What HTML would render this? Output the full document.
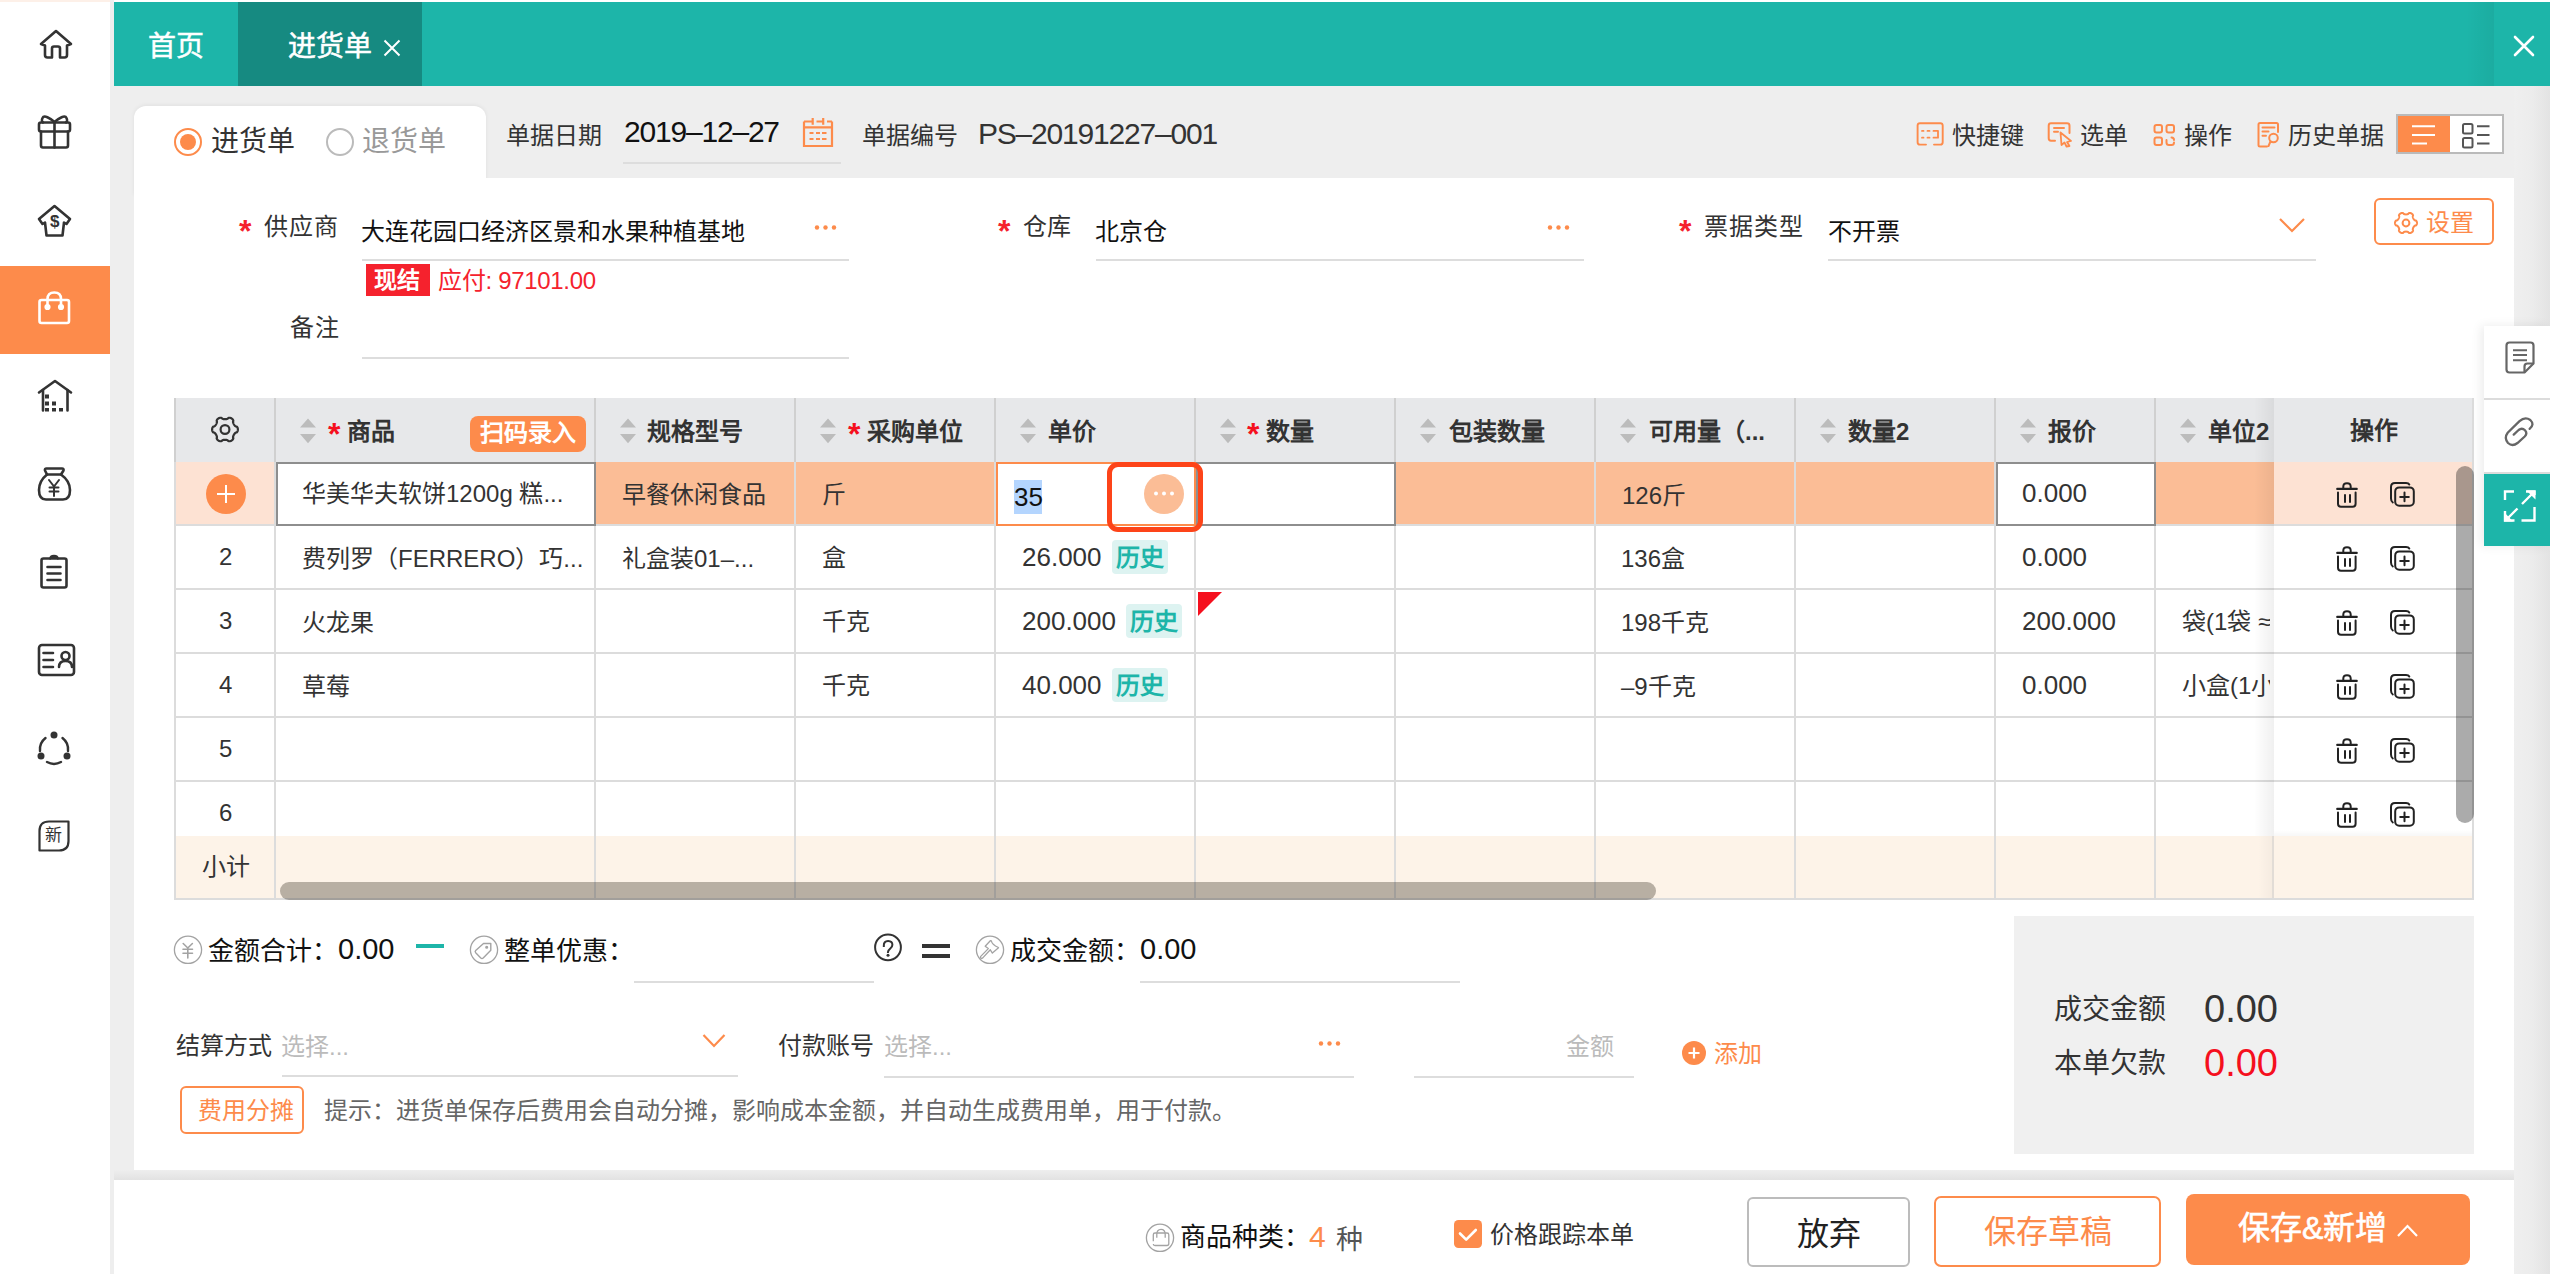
<!DOCTYPE html>
<html lang="zh-CN"><head><meta charset="utf-8">
<style>
html,body{margin:0;padding:0;}
body{width:2550px;height:1274px;overflow:hidden;position:relative;background:#eeeeee;font-family:"Liberation Sans",sans-serif;color:#333;}
.a{position:absolute;}
.t{position:absolute;white-space:nowrap;line-height:1;}
.hl{position:absolute;height:2px;background:#dddddd;}
.vl{position:absolute;width:2px;background:#dddddd;}
svg{position:absolute;overflow:visible;}
</style></head><body>

<!-- SIDEBAR -->
<div class="a" style="left:0;top:0;width:110px;height:1274px;background:#fff;"></div>
<div class="a" style="left:0;top:0;width:110px;height:2px;background:#fdf0e8;"></div>
<div class="a" style="left:0;top:266px;width:110px;height:88px;background:#fd8b4b;"></div>

<!-- HEADER -->
<div class="a" style="left:114px;top:0;width:2436px;height:2px;background:#fff;"></div>
<div class="a" style="left:114px;top:2px;width:2436px;height:84px;background:#1db5a9;"></div>
<div class="a" style="left:238px;top:2px;width:184px;height:84px;background:#168a81;"></div>
<div class="a" style="left:2466px;top:2px;width:28px;height:84px;background:linear-gradient(to right,rgba(0,0,0,0),rgba(0,0,0,0.05));"></div>

<div class="a" style="left:2514px;top:86px;width:36px;height:1188px;background:linear-gradient(to right,#efefef,#ececec 50%,#e3e3e3);"></div>
<!-- CARD -->
<div class="a" style="left:134px;top:106px;width:352px;height:90px;background:#fff;border-radius:12px 12px 0 0;box-shadow:0 -1px 4px rgba(0,0,0,0.06);"></div>
<div class="a" style="left:134px;top:178px;width:2380px;height:992px;background:#fff;"></div>

<!-- BOTTOM BAR -->
<div class="a" style="left:114px;top:1170px;width:2400px;height:10px;background:linear-gradient(to bottom,#eeeeee,#e2e2e2);"></div>
<div class="a" style="left:114px;top:1180px;width:2400px;height:94px;background:#fff;"></div>


<!-- SIDEBAR ICONS -->
<svg width="110" height="900" style="left:0;top:0" fill="none" stroke="#333" stroke-width="2.6" stroke-linejoin="round" stroke-linecap="round">
 <path d="M41,44 L56,31 L71,44 L67,45.5 L67,55 Q67,57.5 64.5,57.5 L60,57.5 L60,48.5 Q60,46.5 58,46.5 L54,46.5 Q52,46.5 52,48.5 L52,57.5 L47.5,57.5 Q45,57.5 45,55 L45,45.5 Z"/>
 <rect x="39" y="122.5" width="31" height="9" rx="2"/>
 <path d="M41,131.5 L41,145.5 Q41,147.5 43,147.5 L66,147.5 Q68,147.5 68,145.5 L68,131.5"/>
 <path d="M54.5,122.5 L54.5,147.5"/>
 <path d="M54.5,122 C50,118 44,114.5 42.5,118 C41.5,120 42,122 43,122.5"/>
 <path d="M54.5,122 C59,118 65,114.5 66.5,118 C67.5,120 67,122 66,122.5"/>
 <path d="M54.5,206 L70,219 L66.5,224 L64,222.5 L62.5,235.5 L46.5,235.5 L45,222.5 L42.5,224 L39,219 Z"/>
 <path d="M396,0" />
 <path d="M39,392.5 L55,381 L71,392.5"/>
 <path d="M43,390 L43,410.5 M67.5,390 L67.5,410.5"/>
 <path d="M47,474.5 L45,470.5 Q44.5,468.5 46.5,468.5 L62,468.5 Q64,468.5 63.5,470.5 L61,474.5"/>
 <path d="M47,474.5 Q39,481 39,490 Q39,499.5 46,499.5 L63,499.5 Q70,499.5 70,490 Q70,481 61,474.5 Z"/>
 <path d="M49,480 L54,486.5 L59,480 M54,486.5 L54,496 M49.5,487.5 L58.5,487.5 M49.5,491.5 L58.5,491.5" stroke-width="2"/>
 <path d="M50,558.5 L43.5,558.5 Q41.5,558.5 41.5,560.5 L41.5,585.5 Q41.5,587.5 43.5,587.5 L64.5,587.5 Q66.5,587.5 66.5,585.5 L66.5,560.5 Q66.5,558.5 64.5,558.5 L58,558.5"/>
 <path d="M50.5,558.5 Q50.5,556 54,556 Q57.5,556 57.5,558.5 Z"/>
 <path d="M47.5,567 L60.5,567 M47.5,573.5 L60.5,573.5 M47.5,580 L60.5,580"/>
 <rect x="39" y="645" width="35" height="30" rx="3"/>
 <path d="M43.5,653 L53,653 M43.5,660 L53,660 M43.5,667 L53,667"/>
 <circle cx="65.5" cy="656" r="4"/>
 <path d="M59,667 Q59,661 65.5,661 Q72,661 72,667"/>
 <path d="M45.5,738 A14.5,14.5 0 0 0 40,751" stroke-width="2.4"/>
 <path d="M62.5,738 A14.5,14.5 0 0 1 68,751" stroke-width="2.4"/>
 <path d="M47,762 A14.5,14.5 0 0 0 61,762" stroke-width="2.4"/>
 <circle cx="54" cy="735" r="3.5" fill="#333" stroke="none"/>
 <circle cx="41" cy="756" r="3.5" fill="#333" stroke="none"/>
 <circle cx="67" cy="756" r="3.5" fill="#333" stroke="none"/>
 <path d="M39.5,850.5 L39.5,831 Q39.5,821.5 49,821.5 L68.5,821.5 L68.5,841 Q68.5,850.5 59,850.5 Z" stroke-width="2.2"/>
</svg>
<div class="t" style="left:50px;top:213px;font-size:17px;font-weight:bold;color:#333;">$</div>
<svg width="10" height="10" style="left:0;top:0" fill="#333">
 <rect x="45" y="394.5" width="4" height="4"/>
 <rect x="45" y="401.5" width="4" height="4"/><rect x="52" y="401.5" width="4" height="4"/>
 <rect x="45" y="408" width="4" height="3.5"/><rect x="52" y="408" width="4" height="3.5"/><rect x="59" y="408" width="4" height="3.5"/>
</svg>
<svg width="110" height="40" style="left:0;top:290px" fill="none" stroke="#fff" stroke-width="2.6" stroke-linejoin="round">
 <rect x="39.5" y="10" width="29.5" height="23" rx="2"/>
 <path d="M47.5,16 L47.5,9 Q47.5,2.5 54.3,2.5 Q61,2.5 61,9 L61,16"/>
 <circle cx="47.5" cy="17" r="1.8" fill="#fff"/><circle cx="61" cy="17" r="1.8" fill="#fff"/>
</svg>
<div class="t" style="left:45px;top:827px;font-size:17px;color:#333;">新</div>

<!-- HEADER TEXT -->
<div class="t" style="left:148px;top:33px;font-size:28px;color:#fff;-webkit-text-stroke:0.5px #fff;">首页</div>
<div class="t" style="left:288px;top:33px;font-size:28px;color:#fff;-webkit-text-stroke:0.5px #fff;">进货单</div>
<svg width="20" height="20" style="left:383px;top:39px" stroke="#fff" stroke-width="2"><path d="M1.5,1.5 L16.5,16.5 M16.5,1.5 L1.5,16.5"/></svg>
<svg width="24" height="24" style="left:2512px;top:34px" stroke="#fff" stroke-width="2.6" stroke-linecap="round"><path d="M3,3 L21,21 M21,3 L3,21"/></svg>


<!-- TOP FORM ROW -->
<svg width="40" height="40" style="left:168px;top:122px"><circle cx="20" cy="20" r="13" fill="none" stroke="#fd8b4b" stroke-width="2"/><circle cx="20" cy="20" r="8" fill="#fd8b4b"/></svg>
<div class="t" style="left:211px;top:128px;font-size:28px;color:#333;">进货单</div>
<svg width="40" height="40" style="left:320px;top:122px"><circle cx="20" cy="20" r="13" fill="none" stroke="#bbb" stroke-width="2"/></svg>
<div class="t" style="left:362px;top:128px;font-size:28px;color:#999;">退货单</div>
<div class="t" style="left:506px;top:124px;font-size:24px;color:#333;">单据日期</div>
<div class="t" style="left:624px;top:117px;font-size:30px;letter-spacing:-1.2px;color:#111;">2019–12–27</div>
<svg width="40" height="40" style="left:800px;top:114px" fill="none" stroke="#fd8b4b" stroke-width="2.2">
 <path d="M4,7.5 L4,32 L32,32 L32,7.5 M4,7.5 L12.5,7.5 M16.5,7.5 L23,7.5 M27,7.5 L32,7.5 M4,13.3 L32,13.3 M12.7,4 L12.7,10.7 M23.2,4 L23.2,10.7"/>
 <path d="M9.5,19 L13.5,19 M16,19 L20,19 M22,19 L26.5,19 M9.5,25 L13.5,25 M16,25 L20,25 M22,25 L26.5,25" stroke-width="2"/>
</svg>
<div class="hl" style="left:623px;top:162px;width:218px;"></div>
<div class="t" style="left:862px;top:124px;font-size:24px;color:#333;">单据编号</div>
<div class="t" style="left:978px;top:119px;font-size:30px;letter-spacing:-1.2px;color:#333;">PS–20191227–001</div>

<!-- TOOLBAR -->
<svg width="300" height="40" style="left:1910px;top:115px" fill="none" stroke="#fd8b4b" stroke-width="2" stroke-linecap="round" stroke-linejoin="round">
 <path d="M16,29.6 L10,29.6 Q7.6,29.6 7.6,27.2 L7.6,10.6 Q7.6,8.2 10,8.2 L30.3,8.2 Q32.7,8.2 32.7,10.6 L32.7,27.2 Q32.7,29.6 30.3,29.6 L24,29.6" stroke-width="1.9"/>
 <path d="M12,15.9 L13.5,15.9 M17.5,15.9 L19.5,15.9 M23.5,15.9 L28,15.9 L28,22.7 M12,22.7 L13.5,22.7 M17.5,22.7 L19.5,22.7 M23.5,22.7 L28,22.7" stroke-width="1.8"/>
 <path d="M145,25.7 L141,25.7 Q138.7,25.7 138.7,23.3 L138.7,10.7 Q138.7,8.3 141,8.3 L157,8.3 Q159.5,8.3 159.5,10.7 L159.5,18"/>
 <path d="M144,13 L154,13 M144,16.7 L148,16.7"/>
 <path d="M150.5,17.5 L161,26 L157,27 L159.5,31 L156.5,31.5 L154.5,27.5 L151.5,30 Z" stroke-width="1.8"/>
 <rect x="244.5" y="10" width="7.5" height="7.5" rx="2"/>
 <rect x="256.5" y="10" width="7.5" height="7.5" rx="2"/>
 <rect x="244.5" y="22.5" width="7.5" height="7.5" rx="2"/>
 <path d="M256.5,25 L256.5,27.5 Q256.5,30 259,30 L261.5,30 Q264,30 264,27.5 M264,25 Q264,22.5 261.5,22.5"/>
</svg>
<svg width="40" height="40" style="left:2250px;top:115px" fill="none" stroke="#fd8b4b" stroke-width="2" stroke-linecap="round" stroke-linejoin="round">
 <path d="M17,31.5 L10,31.5 Q8.5,31.5 8.5,30 L8.5,9.5 Q8.5,8 10,8 L26.5,8 Q28,8 28,9.5 L28,17"/>
 <path d="M12.5,12.6 L24.5,12.6 M12.5,16.5 L18.5,16.5 M12.5,20.8 L16,20.8"/>
 <circle cx="23.5" cy="23" r="4.3"/>
 <path d="M20.5,26.5 L18.5,31"/>
</svg>
<div class="t" style="left:1952px;top:124px;font-size:24px;color:#333;">快捷键</div>
<div class="t" style="left:2080px;top:124px;font-size:24px;color:#333;">选单</div>
<div class="t" style="left:2184px;top:124px;font-size:24px;color:#333;">操作</div>
<div class="t" style="left:2288px;top:124px;font-size:24px;color:#333;">历史单据</div>
<div class="a" style="left:2396px;top:114px;width:104px;height:36px;border:2px solid #bababa;background:#fff;"></div>
<div class="a" style="left:2398px;top:116px;width:52px;height:36px;background:#fd8b4b;"></div>
<svg width="120" height="50" style="left:2390px;top:110px" fill="none" stroke-width="2">
 <path d="M22,16.2 L45,16.2 M22,24.9 L45,24.9 M22,33.4 L37,33.4" stroke="#fff"/>
 <rect x="73" y="14" width="9.5" height="9.5" rx="1.5" stroke="#555"/>
 <rect x="73" y="28" width="9.5" height="9.5" rx="1.5" stroke="#555"/>
 <path d="M87,16.2 L99.5,16.2 M87,24.9 L99.5,24.9 M87,33.4 L99.5,33.4" stroke="#555"/>
</svg>


<!-- FORM ROWS -->
<div class="t" style="left:239px;top:215px;font-size:32px;font-weight:bold;color:#f5222d;">*</div>
<div class="t" style="left:264px;top:215px;font-size:24px;color:#333;letter-spacing:1px;">供应商</div>
<div class="t" style="left:361px;top:220px;font-size:24px;color:#111;">大连花园口经济区景和水果种植基地</div>
<svg width="30" height="10" style="left:812px;top:222px" fill="#fd8b4b"><circle cx="5" cy="5.5" r="2.2"/><circle cx="13.5" cy="5.5" r="2.2"/><circle cx="22" cy="5.5" r="2.2"/></svg>
<div class="hl" style="left:362px;top:259px;width:487px;"></div>
<div class="a" style="left:366px;top:264px;width:64px;height:32px;background:#f5222d;"></div>
<div class="t" style="left:374px;top:269px;font-size:23px;color:#fff;font-weight:bold;">现结</div>
<div class="t" style="left:438px;top:269px;font-size:24px;letter-spacing:-0.3px;color:#f5222d;">应付: 97101.00</div>
<div class="t" style="left:290px;top:316px;font-size:24px;color:#333;letter-spacing:1px;">备注</div>
<div class="hl" style="left:362px;top:357px;width:487px;"></div>

<div class="t" style="left:998px;top:215px;font-size:32px;font-weight:bold;color:#f5222d;">*</div>
<div class="t" style="left:1023px;top:215px;font-size:24px;color:#333;">仓库</div>
<div class="t" style="left:1095px;top:220px;font-size:24px;color:#111;">北京仓</div>
<svg width="30" height="10" style="left:1545px;top:222px" fill="#fd8b4b"><circle cx="5" cy="5.5" r="2.2"/><circle cx="13.5" cy="5.5" r="2.2"/><circle cx="22" cy="5.5" r="2.2"/></svg>
<div class="hl" style="left:1096px;top:259px;width:488px;"></div>

<div class="t" style="left:1679px;top:215px;font-size:32px;font-weight:bold;color:#f5222d;">*</div>
<div class="t" style="left:1704px;top:215px;font-size:24px;color:#333;letter-spacing:1px;">票据类型</div>
<div class="t" style="left:1828px;top:220px;font-size:24px;color:#111;">不开票</div>
<svg width="30" height="20" style="left:2277px;top:216px" fill="none" stroke="#fd8b4b" stroke-width="2.2"><path d="M3,3 L15,15 L27,3"/></svg>
<div class="hl" style="left:1828px;top:259px;width:488px;"></div>

<div class="a" style="left:2374px;top:198px;width:116px;height:43px;border:2px solid #fd8b4b;border-radius:6px;"></div>
<svg width="36" height="36" style="left:2388px;top:205px" fill="none" stroke="#fd8b4b" stroke-width="2"><path transform="translate(18,18)" d="M11.00,0.00 L10.98,0.38 L10.92,0.76 L10.82,1.14 L10.68,1.50 L10.49,1.85 L10.24,2.18 L9.89,2.46 L9.05,2.59 L8.69,2.82 L8.41,3.06 L8.18,3.30 L7.97,3.55 L7.78,3.79 L7.60,4.04 L7.45,4.30 L7.30,4.56 L7.17,4.84 L7.06,5.13 L6.95,5.43 L6.86,5.75 L6.79,6.11 L6.77,6.54 L7.08,7.33 L7.00,7.78 L6.84,8.16 L6.64,8.50 L6.39,8.80 L6.12,9.08 L5.82,9.32 L5.50,9.53 L5.16,9.70 L4.80,9.84 L4.43,9.94 L4.04,10.00 L3.64,10.01 L3.23,9.95 L2.81,9.79 L2.28,9.13 L1.90,8.93 L1.55,8.82 L1.23,8.73 L0.91,8.67 L0.60,8.63 L0.30,8.61 L0.00,8.60 L-0.30,8.61 L-0.60,8.63 L-0.91,8.67 L-1.23,8.73 L-1.55,8.82 L-1.90,8.93 L-2.28,9.13 L-2.81,9.79 L-3.23,9.95 L-3.64,10.01 L-4.04,10.00 L-4.43,9.94 L-4.80,9.84 L-5.16,9.70 L-5.50,9.53 L-5.82,9.32 L-6.12,9.08 L-6.39,8.80 L-6.64,8.50 L-6.84,8.16 L-7.00,7.78 L-7.08,7.33 L-6.77,6.54 L-6.79,6.11 L-6.86,5.75 L-6.95,5.43 L-7.06,5.13 L-7.17,4.84 L-7.30,4.56 L-7.45,4.30 L-7.60,4.04 L-7.78,3.79 L-7.97,3.55 L-8.18,3.30 L-8.41,3.06 L-8.69,2.82 L-9.05,2.59 L-9.89,2.46 L-10.24,2.18 L-10.49,1.85 L-10.68,1.50 L-10.82,1.14 L-10.92,0.76 L-10.98,0.38 L-11.00,0.00 L-10.98,-0.38 L-10.92,-0.76 L-10.82,-1.14 L-10.68,-1.50 L-10.49,-1.85 L-10.24,-2.18 L-9.89,-2.46 L-9.05,-2.59 L-8.69,-2.82 L-8.41,-3.06 L-8.18,-3.30 L-7.97,-3.55 L-7.78,-3.79 L-7.60,-4.04 L-7.45,-4.30 L-7.30,-4.56 L-7.17,-4.84 L-7.06,-5.13 L-6.95,-5.43 L-6.86,-5.75 L-6.79,-6.11 L-6.77,-6.54 L-7.08,-7.33 L-7.00,-7.78 L-6.84,-8.16 L-6.64,-8.50 L-6.39,-8.80 L-6.12,-9.08 L-5.82,-9.32 L-5.50,-9.53 L-5.16,-9.70 L-4.80,-9.84 L-4.43,-9.94 L-4.04,-10.00 L-3.64,-10.01 L-3.23,-9.95 L-2.81,-9.79 L-2.28,-9.13 L-1.90,-8.93 L-1.55,-8.82 L-1.23,-8.73 L-0.91,-8.67 L-0.60,-8.63 L-0.30,-8.61 L-0.00,-8.60 L0.30,-8.61 L0.60,-8.63 L0.91,-8.67 L1.23,-8.73 L1.55,-8.82 L1.90,-8.93 L2.28,-9.13 L2.81,-9.79 L3.23,-9.95 L3.64,-10.01 L4.04,-10.00 L4.43,-9.94 L4.80,-9.84 L5.16,-9.70 L5.50,-9.53 L5.82,-9.32 L6.12,-9.08 L6.39,-8.80 L6.64,-8.50 L6.84,-8.16 L7.00,-7.78 L7.08,-7.33 L6.77,-6.54 L6.79,-6.11 L6.86,-5.75 L6.95,-5.43 L7.06,-5.13 L7.17,-4.84 L7.30,-4.56 L7.45,-4.30 L7.60,-4.04 L7.78,-3.79 L7.97,-3.55 L8.18,-3.30 L8.41,-3.06 L8.69,-2.82 L9.05,-2.59 L9.89,-2.46 L10.24,-2.18 L10.49,-1.85 L10.68,-1.50 L10.82,-1.14 L10.92,-0.76 L10.98,-0.38 L11.00,-0.00Z" stroke-linejoin="round"/><circle cx="18" cy="18" r="3.4"/></svg>
<div class="t" style="left:2426px;top:211px;font-size:24px;color:#fd8b4b;">设置</div>

<!-- TABLE -->
<div class="a" style="left:174px;top:398px;width:2300px;height:502px;background:#fff;"></div>
<div class="a" style="left:174px;top:398px;width:2300px;height:64px;background:#e7e8ea;"></div>
<div class="a" style="left:176px;top:462px;width:98px;height:62px;background:#fde2d3;"></div>
<div class="a" style="left:596px;top:462px;width:1678px;height:62px;background:#fbbd96;"></div>
<div class="a" style="left:176px;top:836px;width:2296px;height:62px;background:#fdf3e8;"></div>
<div class="vl" style="left:174px;top:398px;height:502px;background:#dcdcdc;"></div><div class="vl" style="left:174px;top:398px;height:64px;background:#d0d0d0;"></div>
<div class="vl" style="left:274px;top:398px;height:502px;background:#dcdcdc;"></div><div class="vl" style="left:274px;top:398px;height:64px;background:#d0d0d0;"></div>
<div class="vl" style="left:594px;top:398px;height:502px;background:#dcdcdc;"></div><div class="vl" style="left:594px;top:398px;height:64px;background:#d0d0d0;"></div>
<div class="vl" style="left:794px;top:398px;height:502px;background:#dcdcdc;"></div><div class="vl" style="left:794px;top:398px;height:64px;background:#d0d0d0;"></div>
<div class="vl" style="left:994px;top:398px;height:502px;background:#dcdcdc;"></div><div class="vl" style="left:994px;top:398px;height:64px;background:#d0d0d0;"></div>
<div class="vl" style="left:1194px;top:398px;height:502px;background:#dcdcdc;"></div><div class="vl" style="left:1194px;top:398px;height:64px;background:#d0d0d0;"></div>
<div class="vl" style="left:1394px;top:398px;height:502px;background:#dcdcdc;"></div><div class="vl" style="left:1394px;top:398px;height:64px;background:#d0d0d0;"></div>
<div class="vl" style="left:1594px;top:398px;height:502px;background:#dcdcdc;"></div><div class="vl" style="left:1594px;top:398px;height:64px;background:#d0d0d0;"></div>
<div class="vl" style="left:1794px;top:398px;height:502px;background:#dcdcdc;"></div><div class="vl" style="left:1794px;top:398px;height:64px;background:#d0d0d0;"></div>
<div class="vl" style="left:1994px;top:398px;height:502px;background:#dcdcdc;"></div><div class="vl" style="left:1994px;top:398px;height:64px;background:#d0d0d0;"></div>
<div class="vl" style="left:2154px;top:398px;height:502px;background:#dcdcdc;"></div><div class="vl" style="left:2154px;top:398px;height:64px;background:#d0d0d0;"></div>
<div class="hl" style="left:176px;top:524px;width:2296px;background:#dcdcdc;"></div>
<div class="hl" style="left:176px;top:588px;width:2296px;background:#dcdcdc;"></div>
<div class="hl" style="left:176px;top:652px;width:2296px;background:#dcdcdc;"></div>
<div class="hl" style="left:176px;top:716px;width:2296px;background:#dcdcdc;"></div>
<div class="hl" style="left:176px;top:780px;width:2296px;background:#dcdcdc;"></div>
<div class="hl" style="left:174px;top:898px;width:2300px;background:#dcdcdc;"></div>
<div class="vl" style="left:2472px;top:398px;height:502px;background:#dcdcdc;"></div>
<div class="a" style="left:276px;top:462px;width:316px;height:60px;border:2px solid #8e8e8e;background:#fff;"></div>
<div class="a" style="left:996px;top:462px;width:196px;height:60px;border:2px solid #fd8b4b;background:#fff;"></div>
<div class="a" style="left:1196px;top:462px;width:196px;height:60px;border:2px solid #8e8e8e;background:#fff;"></div>
<div class="a" style="left:1996px;top:462px;width:156px;height:60px;border:2px solid #8e8e8e;background:#fff;"></div>
<svg width="40" height="40" style="left:205px;top:409px" fill="none" stroke="#333" stroke-width="2.2"><path transform="translate(20,20.5)" d="M12.90,0.00 L12.88,0.45 L12.81,0.90 L12.70,1.33 L12.54,1.76 L12.33,2.17 L12.05,2.56 L11.66,2.91 L10.75,3.08 L10.34,3.36 L10.04,3.65 L9.77,3.95 L9.53,4.24 L9.31,4.54 L9.11,4.84 L8.92,5.15 L8.75,5.47 L8.59,5.79 L8.44,6.13 L8.30,6.49 L8.18,6.87 L8.08,7.28 L8.04,7.77 L8.35,8.65 L8.25,9.16 L8.05,9.59 L7.80,9.98 L7.51,10.33 L7.18,10.65 L6.83,10.93 L6.45,11.17 L6.05,11.38 L5.63,11.54 L5.19,11.67 L4.74,11.74 L4.28,11.76 L3.81,11.72 L3.31,11.55 L2.70,10.85 L2.26,10.64 L1.85,10.52 L1.47,10.43 L1.09,10.37 L0.72,10.33 L0.36,10.31 L0.00,10.30 L-0.36,10.31 L-0.72,10.33 L-1.09,10.37 L-1.47,10.43 L-1.85,10.52 L-2.26,10.64 L-2.70,10.85 L-3.31,11.55 L-3.81,11.72 L-4.28,11.76 L-4.74,11.74 L-5.19,11.67 L-5.63,11.54 L-6.05,11.38 L-6.45,11.17 L-6.83,10.93 L-7.18,10.65 L-7.51,10.33 L-7.80,9.98 L-8.05,9.59 L-8.25,9.16 L-8.35,8.65 L-8.04,7.77 L-8.08,7.28 L-8.18,6.87 L-8.30,6.49 L-8.44,6.13 L-8.59,5.79 L-8.75,5.47 L-8.92,5.15 L-9.11,4.84 L-9.31,4.54 L-9.53,4.24 L-9.77,3.95 L-10.04,3.65 L-10.34,3.36 L-10.75,3.08 L-11.66,2.91 L-12.05,2.56 L-12.33,2.17 L-12.54,1.76 L-12.70,1.33 L-12.81,0.90 L-12.88,0.45 L-12.90,0.00 L-12.88,-0.45 L-12.81,-0.90 L-12.70,-1.33 L-12.54,-1.76 L-12.33,-2.17 L-12.05,-2.56 L-11.66,-2.91 L-10.75,-3.08 L-10.34,-3.36 L-10.04,-3.65 L-9.77,-3.95 L-9.53,-4.24 L-9.31,-4.54 L-9.11,-4.84 L-8.92,-5.15 L-8.75,-5.47 L-8.59,-5.79 L-8.44,-6.13 L-8.30,-6.49 L-8.18,-6.87 L-8.08,-7.28 L-8.04,-7.77 L-8.35,-8.65 L-8.25,-9.16 L-8.05,-9.59 L-7.80,-9.98 L-7.51,-10.33 L-7.18,-10.65 L-6.83,-10.93 L-6.45,-11.17 L-6.05,-11.38 L-5.63,-11.54 L-5.19,-11.67 L-4.74,-11.74 L-4.28,-11.76 L-3.81,-11.72 L-3.31,-11.55 L-2.70,-10.85 L-2.26,-10.64 L-1.85,-10.52 L-1.47,-10.43 L-1.09,-10.37 L-0.72,-10.33 L-0.36,-10.31 L-0.00,-10.30 L0.36,-10.31 L0.72,-10.33 L1.09,-10.37 L1.47,-10.43 L1.85,-10.52 L2.26,-10.64 L2.70,-10.85 L3.31,-11.55 L3.81,-11.72 L4.28,-11.76 L4.74,-11.74 L5.19,-11.67 L5.63,-11.54 L6.05,-11.38 L6.45,-11.17 L6.83,-10.93 L7.18,-10.65 L7.51,-10.33 L7.80,-9.98 L8.05,-9.59 L8.25,-9.16 L8.35,-8.65 L8.04,-7.77 L8.08,-7.28 L8.18,-6.87 L8.30,-6.49 L8.44,-6.13 L8.59,-5.79 L8.75,-5.47 L8.92,-5.15 L9.11,-4.84 L9.31,-4.54 L9.53,-4.24 L9.77,-3.95 L10.04,-3.65 L10.34,-3.36 L10.75,-3.08 L11.66,-2.91 L12.05,-2.56 L12.33,-2.17 L12.54,-1.76 L12.70,-1.33 L12.81,-0.90 L12.88,-0.45 L12.90,-0.00Z" stroke-linejoin="round"/><circle cx="20" cy="20.5" r="4.4"/></svg>
<svg width="20" height="30" style="left:300px;top:416px" fill="#bcbcbc"><path d="M0,11.6 L8,2.4 L16,11.6 Z M0,18.1 L16,18.1 L8,27.2 Z"/></svg>
<div class="t" style="left:328px;top:418px;font-size:32px;font-weight:bold;color:#f5101e;">*</div>
<div class="t" style="left:347px;top:420px;font-size:24px;font-weight:bold;color:#333;">商品</div>
<svg width="20" height="30" style="left:620px;top:416px" fill="#bcbcbc"><path d="M0,11.6 L8,2.4 L16,11.6 Z M0,18.1 L16,18.1 L8,27.2 Z"/></svg>
<div class="t" style="left:647px;top:420px;font-size:24px;font-weight:bold;color:#333;">规格型号</div>
<svg width="20" height="30" style="left:820px;top:416px" fill="#bcbcbc"><path d="M0,11.6 L8,2.4 L16,11.6 Z M0,18.1 L16,18.1 L8,27.2 Z"/></svg>
<div class="t" style="left:848px;top:418px;font-size:32px;font-weight:bold;color:#f5101e;">*</div>
<div class="t" style="left:867px;top:420px;font-size:24px;font-weight:bold;color:#333;">采购单位</div>
<svg width="20" height="30" style="left:1020px;top:416px" fill="#bcbcbc"><path d="M0,11.6 L8,2.4 L16,11.6 Z M0,18.1 L16,18.1 L8,27.2 Z"/></svg>
<div class="t" style="left:1048px;top:420px;font-size:24px;font-weight:bold;color:#333;">单价</div>
<svg width="20" height="30" style="left:1220px;top:416px" fill="#bcbcbc"><path d="M0,11.6 L8,2.4 L16,11.6 Z M0,18.1 L16,18.1 L8,27.2 Z"/></svg>
<div class="t" style="left:1247px;top:418px;font-size:32px;font-weight:bold;color:#f5101e;">*</div>
<div class="t" style="left:1266px;top:420px;font-size:24px;font-weight:bold;color:#333;">数量</div>
<svg width="20" height="30" style="left:1420px;top:416px" fill="#bcbcbc"><path d="M0,11.6 L8,2.4 L16,11.6 Z M0,18.1 L16,18.1 L8,27.2 Z"/></svg>
<div class="t" style="left:1449px;top:420px;font-size:24px;font-weight:bold;color:#333;">包装数量</div>
<svg width="20" height="30" style="left:1620px;top:416px" fill="#bcbcbc"><path d="M0,11.6 L8,2.4 L16,11.6 Z M0,18.1 L16,18.1 L8,27.2 Z"/></svg>
<div class="t" style="left:1649px;top:420px;font-size:24px;font-weight:bold;color:#333;">可用量（...</div>
<svg width="20" height="30" style="left:1820px;top:416px" fill="#bcbcbc"><path d="M0,11.6 L8,2.4 L16,11.6 Z M0,18.1 L16,18.1 L8,27.2 Z"/></svg>
<div class="t" style="left:1848px;top:420px;font-size:24px;font-weight:bold;color:#333;">数量2</div>
<svg width="20" height="30" style="left:2020px;top:416px" fill="#bcbcbc"><path d="M0,11.6 L8,2.4 L16,11.6 Z M0,18.1 L16,18.1 L8,27.2 Z"/></svg>
<div class="t" style="left:2048px;top:420px;font-size:24px;font-weight:bold;color:#333;">报价</div>
<svg width="20" height="30" style="left:2180px;top:416px" fill="#bcbcbc"><path d="M0,11.6 L8,2.4 L16,11.6 Z M0,18.1 L16,18.1 L8,27.2 Z"/></svg>
<div class="t" style="left:2208px;top:420px;font-size:24px;font-weight:bold;color:#333;">单位2</div>
<div class="a" style="left:470px;top:416px;width:116px;height:36px;background:#fd8b4b;border-radius:8px;"></div>
<div class="t" style="left:480px;top:421px;font-size:24px;font-weight:bold;color:#fff;">扫码录入</div>
<div class="a" style="left:2254px;top:398px;width:20px;height:438px;background:linear-gradient(to right,rgba(0,0,0,0),rgba(0,0,0,0.06));"></div>
<div class="a" style="left:2274px;top:398px;width:198px;height:64px;background:#e7e8ea;"></div>
<div class="a" style="left:2274px;top:462px;width:198px;height:62px;background:#fde2d3;"></div>
<div class="a" style="left:2274px;top:526px;width:198px;height:310px;background:#fff;"></div>
<div class="hl" style="left:2274px;top:524px;width:198px;background:#dcdcdc;"></div>
<div class="hl" style="left:2274px;top:588px;width:198px;background:#dcdcdc;"></div>
<div class="hl" style="left:2274px;top:652px;width:198px;background:#dcdcdc;"></div>
<div class="hl" style="left:2274px;top:716px;width:198px;background:#dcdcdc;"></div>
<div class="hl" style="left:2274px;top:780px;width:198px;background:#dcdcdc;"></div>
<div class="t" style="left:2350px;top:419px;font-size:24px;font-weight:bold;color:#333;">操作</div>
<svg width="30" height="30" style="left:2331px;top:478px" fill="none" stroke="#222" stroke-width="2" stroke-linecap="round"><path d="M6.2,10.9 L25.8,10.9" stroke-width="2.1"/><path d="M12.3,10.5 L12.3,8.6 Q12.3,5.2 16,5.2 Q19.7,5.2 19.7,8.6 L19.7,10.5"/><path d="M7,14.5 L7,25.8 Q7,28.8 10,28.8 L21.6,28.8 Q24.6,28.8 24.6,25.8 L24.6,14.5"/><path d="M14,17 L14,23.9 M19,17 L19,23.9"/></svg>
<svg width="30" height="30" style="left:2385px;top:478px" fill="none" stroke="#222" stroke-width="2" stroke-linecap="round"><path d="M24.3,6.5 Q23.5,5 21,5 L10,5 Q6,5 6,9 L6,20.5 Q6,23.2 7.8,24.5"/><rect x="10.2" y="9.4" width="18.6" height="18.4" rx="4"/><path d="M19.5,14.6 L19.5,23.2 M15.2,19 L23.8,19"/></svg>
<svg width="30" height="30" style="left:2331px;top:542px" fill="none" stroke="#222" stroke-width="2" stroke-linecap="round"><path d="M6.2,10.9 L25.8,10.9" stroke-width="2.1"/><path d="M12.3,10.5 L12.3,8.6 Q12.3,5.2 16,5.2 Q19.7,5.2 19.7,8.6 L19.7,10.5"/><path d="M7,14.5 L7,25.8 Q7,28.8 10,28.8 L21.6,28.8 Q24.6,28.8 24.6,25.8 L24.6,14.5"/><path d="M14,17 L14,23.9 M19,17 L19,23.9"/></svg>
<svg width="30" height="30" style="left:2385px;top:542px" fill="none" stroke="#222" stroke-width="2" stroke-linecap="round"><path d="M24.3,6.5 Q23.5,5 21,5 L10,5 Q6,5 6,9 L6,20.5 Q6,23.2 7.8,24.5"/><rect x="10.2" y="9.4" width="18.6" height="18.4" rx="4"/><path d="M19.5,14.6 L19.5,23.2 M15.2,19 L23.8,19"/></svg>
<svg width="30" height="30" style="left:2331px;top:606px" fill="none" stroke="#222" stroke-width="2" stroke-linecap="round"><path d="M6.2,10.9 L25.8,10.9" stroke-width="2.1"/><path d="M12.3,10.5 L12.3,8.6 Q12.3,5.2 16,5.2 Q19.7,5.2 19.7,8.6 L19.7,10.5"/><path d="M7,14.5 L7,25.8 Q7,28.8 10,28.8 L21.6,28.8 Q24.6,28.8 24.6,25.8 L24.6,14.5"/><path d="M14,17 L14,23.9 M19,17 L19,23.9"/></svg>
<svg width="30" height="30" style="left:2385px;top:606px" fill="none" stroke="#222" stroke-width="2" stroke-linecap="round"><path d="M24.3,6.5 Q23.5,5 21,5 L10,5 Q6,5 6,9 L6,20.5 Q6,23.2 7.8,24.5"/><rect x="10.2" y="9.4" width="18.6" height="18.4" rx="4"/><path d="M19.5,14.6 L19.5,23.2 M15.2,19 L23.8,19"/></svg>
<svg width="30" height="30" style="left:2331px;top:670px" fill="none" stroke="#222" stroke-width="2" stroke-linecap="round"><path d="M6.2,10.9 L25.8,10.9" stroke-width="2.1"/><path d="M12.3,10.5 L12.3,8.6 Q12.3,5.2 16,5.2 Q19.7,5.2 19.7,8.6 L19.7,10.5"/><path d="M7,14.5 L7,25.8 Q7,28.8 10,28.8 L21.6,28.8 Q24.6,28.8 24.6,25.8 L24.6,14.5"/><path d="M14,17 L14,23.9 M19,17 L19,23.9"/></svg>
<svg width="30" height="30" style="left:2385px;top:670px" fill="none" stroke="#222" stroke-width="2" stroke-linecap="round"><path d="M24.3,6.5 Q23.5,5 21,5 L10,5 Q6,5 6,9 L6,20.5 Q6,23.2 7.8,24.5"/><rect x="10.2" y="9.4" width="18.6" height="18.4" rx="4"/><path d="M19.5,14.6 L19.5,23.2 M15.2,19 L23.8,19"/></svg>
<svg width="30" height="30" style="left:2331px;top:734px" fill="none" stroke="#222" stroke-width="2" stroke-linecap="round"><path d="M6.2,10.9 L25.8,10.9" stroke-width="2.1"/><path d="M12.3,10.5 L12.3,8.6 Q12.3,5.2 16,5.2 Q19.7,5.2 19.7,8.6 L19.7,10.5"/><path d="M7,14.5 L7,25.8 Q7,28.8 10,28.8 L21.6,28.8 Q24.6,28.8 24.6,25.8 L24.6,14.5"/><path d="M14,17 L14,23.9 M19,17 L19,23.9"/></svg>
<svg width="30" height="30" style="left:2385px;top:734px" fill="none" stroke="#222" stroke-width="2" stroke-linecap="round"><path d="M24.3,6.5 Q23.5,5 21,5 L10,5 Q6,5 6,9 L6,20.5 Q6,23.2 7.8,24.5"/><rect x="10.2" y="9.4" width="18.6" height="18.4" rx="4"/><path d="M19.5,14.6 L19.5,23.2 M15.2,19 L23.8,19"/></svg>
<svg width="30" height="30" style="left:2331px;top:798px" fill="none" stroke="#222" stroke-width="2" stroke-linecap="round"><path d="M6.2,10.9 L25.8,10.9" stroke-width="2.1"/><path d="M12.3,10.5 L12.3,8.6 Q12.3,5.2 16,5.2 Q19.7,5.2 19.7,8.6 L19.7,10.5"/><path d="M7,14.5 L7,25.8 Q7,28.8 10,28.8 L21.6,28.8 Q24.6,28.8 24.6,25.8 L24.6,14.5"/><path d="M14,17 L14,23.9 M19,17 L19,23.9"/></svg>
<svg width="30" height="30" style="left:2385px;top:798px" fill="none" stroke="#222" stroke-width="2" stroke-linecap="round"><path d="M24.3,6.5 Q23.5,5 21,5 L10,5 Q6,5 6,9 L6,20.5 Q6,23.2 7.8,24.5"/><rect x="10.2" y="9.4" width="18.6" height="18.4" rx="4"/><path d="M19.5,14.6 L19.5,23.2 M15.2,19 L23.8,19"/></svg>
<svg width="44" height="44" style="left:204px;top:472px"><circle cx="22" cy="22" r="20" fill="#fd8b4b"/><path d="M13,22 L31,22 M22,13 L22,31" stroke="#fff" stroke-width="2"/></svg>
<div class="t" style="left:302px;top:482px;font-size:24px;color:#333;">华美华夫软饼1200g 糕...</div>
<div class="t" style="left:622px;top:483px;font-size:24px;color:#333;">早餐休闲食品</div>
<div class="t" style="left:822px;top:483px;font-size:24px;color:#333;">斤</div>
<div class="a" style="left:1014px;top:480px;width:28px;height:34px;background:#b4d5fe;"></div>
<div class="t" style="left:1014px;top:484px;font-size:26px;color:#111;">35</div>
<svg width="44" height="44" style="left:1142px;top:472px"><circle cx="22" cy="22" r="20" fill="#fbbd96"/><circle cx="14" cy="21.5" r="2" fill="#fff"/><circle cx="22" cy="21.5" r="2" fill="#fff"/><circle cx="30" cy="21.5" r="2" fill="#fff"/></svg>
<div class="t" style="left:1622px;top:484px;font-size:24px;color:#333;">126斤</div>
<div class="t" style="left:2022px;top:480px;font-size:26px;color:#333;">0.000</div>
<div class="a" style="left:1107px;top:462px;width:86px;height:60px;border:5px solid #fd4419;border-radius:11px;"></div>
<div class="t" style="left:219px;top:545px;font-size:24px;color:#333;">2</div>
<div class="t" style="left:302px;top:547px;font-size:24px;color:#333;">费列罗（FERRERO）巧...</div>
<div class="t" style="left:622px;top:547px;font-size:24px;color:#333;">礼盒装01–...</div>
<div class="t" style="left:822px;top:546px;font-size:24px;color:#333;">盒</div>
<div class="t" style="left:1022px;top:544px;font-size:26px;color:#333;">26.000</div>
<div class="a" style="left:1112px;top:540px;width:56px;height:34px;background:#ddf3f1;border-radius:4px;"></div><div class="t" style="left:1116px;top:546px;font-size:24px;font-weight:bold;color:#1db5a9;">历史</div>
<div class="t" style="left:1621px;top:547px;font-size:24px;color:#333;">136盒</div>
<div class="t" style="left:2022px;top:544px;font-size:26px;color:#333;">0.000</div>
<div class="t" style="left:219px;top:609px;font-size:24px;color:#333;">3</div>
<div class="t" style="left:302px;top:611px;font-size:24px;color:#333;">火龙果</div>
<div class="t" style="left:822px;top:610px;font-size:24px;color:#333;">千克</div>
<div class="t" style="left:1022px;top:608px;font-size:26px;color:#333;">200.000</div>
<div class="a" style="left:1126px;top:604px;width:56px;height:34px;background:#ddf3f1;border-radius:4px;"></div><div class="t" style="left:1130px;top:610px;font-size:24px;font-weight:bold;color:#1db5a9;">历史</div>
<div class="t" style="left:1621px;top:611px;font-size:24px;color:#333;">198千克</div>
<div class="t" style="left:2022px;top:608px;font-size:26px;color:#333;">200.000</div>
<div class="a" style="left:2182px;top:590px;width:88px;height:62px;overflow:hidden;"><div class="t" style="left:0px;top:20px;font-size:24px;color:#333;">袋(1袋 ≈</div></div>
<div class="t" style="left:219px;top:673px;font-size:24px;color:#333;">4</div>
<div class="t" style="left:302px;top:675px;font-size:24px;color:#333;">草莓</div>
<div class="t" style="left:822px;top:674px;font-size:24px;color:#333;">千克</div>
<div class="t" style="left:1022px;top:672px;font-size:26px;color:#333;">40.000</div>
<div class="a" style="left:1112px;top:668px;width:56px;height:34px;background:#ddf3f1;border-radius:4px;"></div><div class="t" style="left:1116px;top:674px;font-size:24px;font-weight:bold;color:#1db5a9;">历史</div>
<div class="t" style="left:1621px;top:675px;font-size:24px;color:#333;">–9千克</div>
<div class="t" style="left:2022px;top:672px;font-size:26px;color:#333;">0.000</div>
<div class="a" style="left:2182px;top:654px;width:88px;height:62px;overflow:hidden;"><div class="t" style="left:0px;top:20px;font-size:24px;color:#333;">小盒(1小盒</div></div>
<div class="t" style="left:219px;top:737px;font-size:24px;color:#333;">5</div>
<div class="t" style="left:219px;top:801px;font-size:24px;color:#333;">6</div>
<svg width="30" height="30" style="left:1198px;top:592px"><path d="M0,0 L24,0 L0,24 Z" fill="#f5101e"/></svg>
<div class="t" style="left:202px;top:855px;font-size:24px;color:#333;">小计</div>
<div class="a" style="left:2258px;top:836px;width:14px;height:62px;background:linear-gradient(to right,rgba(0,0,0,0),rgba(0,0,0,0.03));"></div>
<div class="vl" style="left:2272px;top:836px;height:62px;background:#e2dcd6;"></div>
<div class="a" style="left:2274px;top:830px;width:198px;height:6px;background:linear-gradient(to bottom,rgba(0,0,0,0),rgba(0,0,0,0.03));"></div>
<div class="a" style="left:280px;top:882px;width:1376px;height:18px;border-radius:9px;background:rgba(40,30,20,0.32);"></div>
<div class="a" style="left:2456px;top:466px;width:18px;height:357px;border-radius:9px;background:rgba(0,0,0,0.33);"></div>
<!-- SUMMARY ROW -->
<svg width="40" height="40" style="left:168px;top:930px" fill="none" stroke="#a3a3a3" stroke-width="1.3"><circle cx="20" cy="19.8" r="13.6"/><path d="M15.2,13.5 L19.8,18 L24.4,13.5 M15,19.3 L24.5,19.3 M15,23.3 L24.5,23.3 M19.8,18 L19.8,28" stroke-width="1.6" stroke-linecap="round"/></svg>
<div class="t" style="left:208px;top:938px;font-size:26px;color:#111;">金额合计：</div>
<div class="t" style="left:338px;top:935px;font-size:29px;color:#111;">0.00</div>
<div class="a" style="left:416px;top:944px;width:28px;height:4px;background:#1db5a9;"></div>
<svg width="40" height="40" style="left:464px;top:930px" fill="none" stroke="#a3a3a3" stroke-width="1.3"><circle cx="20" cy="19.8" r="13.6"/><path d="M19.5,13.5 L26.8,13.5 L26.8,20.3 L19.2,27.9 Q18,29 16.8,27.9 L11.7,22.8 Q10.6,21.6 11.7,20.5 Z" stroke-width="1.4" stroke-linejoin="round"/><circle cx="22.7" cy="17.2" r="0.9" fill="#a3a3a3"/></svg>
<div class="t" style="left:504px;top:938px;font-size:26px;color:#111;">整单优惠：</div>
<div class="hl" style="left:634px;top:981px;width:240px;"></div>
<svg width="40" height="40" style="left:868px;top:927px" fill="none" stroke="#333" stroke-width="2"><circle cx="20" cy="20.3" r="12.9"/><path d="M15.8,19 Q15.6,14 20.2,14.1 Q24.3,14.3 24.4,17.7 Q24.4,19.8 22.3,21.5 Q20.2,23.2 20,25" stroke-width="2" stroke-linecap="square"/><circle cx="20" cy="28.3" r="1.5" fill="#333" stroke="none"/></svg>
<div class="a" style="left:922px;top:944px;width:28px;height:4px;background:#333;"></div>
<div class="a" style="left:922px;top:954px;width:28px;height:4px;background:#333;"></div>
<svg width="40" height="40" style="left:970px;top:930px" fill="none" stroke="#a3a3a3" stroke-width="1.3"><circle cx="20" cy="19.8" r="13.6"/><path d="M20.3,10.7 L15.2,16.3 L18.3,18.6 L10.5,26.6 Q10.2,28 11.4,28.3 Q12.5,28.4 13,27.6 L20.3,19.8 L22.4,23.1 L28.5,17.8 L27.5,17 Q25.5,16.4 23.3,14.3 Q21.6,12.6 21.4,11 Z" stroke-width="1.3" stroke-linejoin="round"/></svg>
<div class="t" style="left:1010px;top:938px;font-size:26px;color:#111;">成交金额：</div>
<div class="t" style="left:1140px;top:935px;font-size:29px;color:#111;">0.00</div>
<div class="hl" style="left:1140px;top:981px;width:320px;"></div>
<div class="t" style="left:176px;top:1034px;font-size:24px;color:#333;">结算方式</div>
<div class="t" style="left:281px;top:1035px;font-size:24px;color:#bbb;">选择...</div>
<svg width="30" height="20" style="left:700px;top:1032px" fill="none" stroke="#fd8b4b" stroke-width="2.2"><path d="M3.5,3 L14,14 L24.5,3"/></svg>
<div class="hl" style="left:282px;top:1075px;width:456px;"></div>
<div class="t" style="left:778px;top:1034px;font-size:24px;color:#333;">付款账号</div>
<div class="t" style="left:884px;top:1035px;font-size:24px;color:#bbb;">选择...</div>
<svg width="30" height="10" style="left:1316px;top:1038px" fill="#fd8b4b"><circle cx="5" cy="5.5" r="2.2"/><circle cx="13.5" cy="5.5" r="2.2"/><circle cx="22" cy="5.5" r="2.2"/></svg>
<div class="hl" style="left:884px;top:1076px;width:470px;"></div>
<div class="t" style="left:1566px;top:1035px;font-size:24px;color:#bbb;">金额</div>
<div class="hl" style="left:1414px;top:1076px;width:220px;"></div>
<svg width="30" height="30" style="left:1679px;top:1038px"><circle cx="15" cy="15" r="12" fill="#fd8b4b"/><path d="M9.5,15 L20.5,15 M15,9.5 L15,20.5" stroke="#fff" stroke-width="2.2"/></svg>
<div class="t" style="left:1714px;top:1042px;font-size:24px;color:#fd8b4b;">添加</div>
<div class="a" style="left:180px;top:1086px;width:120px;height:44px;border:2px solid #fd8b4b;border-radius:6px;"></div>
<div class="t" style="left:198px;top:1099px;font-size:24px;color:#fd8b4b;">费用分摊</div>
<div class="t" style="left:324px;top:1099px;font-size:24px;color:#666;">提示：进货单保存后费用会自动分摊，影响成本金额，并自动生成费用单，用于付款。</div>
<div class="a" style="left:2014px;top:916px;width:460px;height:238px;background:#f0f0f0;"></div>
<div class="t" style="left:2054px;top:996px;font-size:28px;color:#333;">成交金额</div>
<div class="t" style="left:2204px;top:990px;font-size:38px;color:#333;">0.00</div>
<div class="t" style="left:2054px;top:1050px;font-size:28px;color:#333;">本单欠款</div>
<div class="t" style="left:2204px;top:1044px;font-size:38px;color:#f5101e;">0.00</div>
<svg width="40" height="40" style="left:1140px;top:1218px" fill="none" stroke="#a3a3a3" stroke-width="1.3"><circle cx="20" cy="19.8" r="13.6"/><path d="M13.3,23.2 L13.3,16.8 Q13.3,15 15,15 L27,15 Q28.8,15 28.8,16.8 L28.8,25.5 Q28.8,27.5 27,27.5 L15,27.5 Q13.3,27.5 13.3,26" stroke-width="1.3"/><path d="M16.8,19.8 L16.8,16.5 Q16.8,11.3 21,11.3 Q25.2,11.3 25.2,16.5 L25.2,19.8" stroke-width="1.3"/></svg>
<div class="t" style="left:1180px;top:1224px;font-size:26px;color:#111;">商品种类：</div>
<div class="t" style="left:1309px;top:1222px;font-size:30px;color:#fd8b4b;">4</div>
<div class="t" style="left:1336px;top:1227px;font-size:27px;color:#555;">种</div>
<svg width="30" height="30" style="left:1454px;top:1220px"><rect x="0" y="0" width="28" height="28" rx="4.5" fill="#fd8b4b"/><path d="M6,13.5 L12.2,19.7 L21.8,10" fill="none" stroke="#fff" stroke-width="2.6" stroke-linecap="round" stroke-linejoin="round"/></svg>
<div class="t" style="left:1490px;top:1223px;font-size:24px;color:#333;">价格跟踪本单</div>
<div class="a" style="left:1747px;top:1197px;width:159px;height:66px;border:2px solid #bcbcbc;border-radius:6px;"></div>
<div class="t" style="left:1797px;top:1218px;font-size:32px;color:#222;">放弃</div>
<div class="a" style="left:1934px;top:1196px;width:223px;height:67px;border:2px solid #fd8b4b;border-radius:7px;"></div>
<div class="t" style="left:1984px;top:1216px;font-size:32px;color:#fd8b4b;">保存草稿</div>
<div class="a" style="left:2186px;top:1194px;width:284px;height:71px;background:#fd8b4b;border-radius:8px;"></div>
<div class="t" style="left:2238px;top:1212px;font-size:32px;color:#fff;-webkit-text-stroke:0.6px #fff;">保存&amp;新增</div>
<svg width="30" height="20" style="left:2394px;top:1220px" fill="none" stroke="#fff" stroke-width="2.2"><path d="M4,16 L13.5,6 L23,16"/></svg>
<div class="a" style="left:2484px;top:326px;width:66px;height:220px;background:#fff;box-shadow:-3px 0 10px rgba(0,0,0,0.08);"></div>
<div class="a" style="left:2484px;top:398px;width:66px;height:2px;background:#dcdcdc;"></div>
<div class="a" style="left:2484px;top:472px;width:66px;height:2px;background:#dcdcdc;"></div>
<div class="a" style="left:2484px;top:474px;width:66px;height:72px;background:#1db5a9;"></div>
<svg width="40" height="40" style="left:2500px;top:338px" fill="none" stroke="#666" stroke-width="2.2" stroke-linejoin="round"><path d="M24.5,34.5 L9.5,34.5 Q6.5,34.5 6.5,31.5 L6.5,7.5 Q6.5,4.5 9.5,4.5 L30.5,4.5 Q33.5,4.5 33.5,7.5 L33.5,25.5 Z"/><path d="M24.5,34.5 L24.5,28.5 Q24.5,25.5 27.5,25.5 L33.5,25.5"/><path d="M13,12.2 L27,12.2 M13,16.9 L27,16.9 M13,22.3 L27,22.3" stroke-width="2"/></svg>
<svg width="40" height="42" style="left:2500px;top:408px" fill="none" stroke="#666" stroke-width="2.3" stroke-linecap="round"><path d="M13.7,26.6 L18.6,22 Q22,19.3 25,22.3 Q27.8,25.5 24.7,28.5 L17.5,35 Q12.5,39 8,35 Q3.8,30 7.7,24.8 L19.5,13.2 Q25,8.2 30.3,12 Q35,16.5 29.6,20.8"/></svg>
<svg width="40" height="40" style="left:2500px;top:486px" fill="none" stroke="#fff" stroke-width="2.4"><path d="M5,14 L5,5.5 L14,5.5 M21.5,34.5 L34.5,34.5 L34.5,21 M26,5.5 L34.5,5.5 L34.5,9 M5,25 L5,34.5 L14.5,34.5"/><path d="M33,7 L22,18 M7,33 L17.5,22.5"/><path d="M26.5,4.5 L35.5,4.5 L35.5,13.5 Z M4,26 L4,35.5 L13,35.5 Z" fill="#fff" stroke="none"/></svg>
</body></html>
